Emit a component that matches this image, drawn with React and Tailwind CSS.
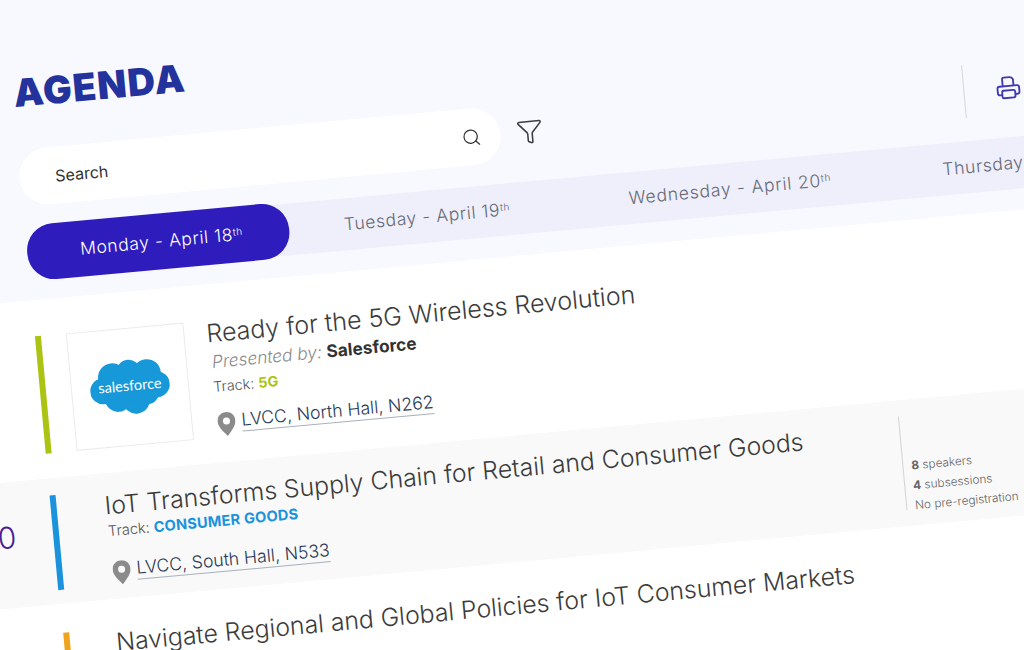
import React from "react";
import { Search, Funnel } from "lucide-react";

function Pin() {
  return (
    <svg width="18" height="24" viewBox="0 0 18 24" className="shrink-0 mt-[6px]">
      <path fillRule="evenodd" fill="#8b8b8b" d="M9 0C4 0 0 4 0 9c0 5.500 6 11.500 9 15 3-3.500 9-9.500 9-15 0-5-4-9-9-9zm0 5.500a3.500 3.500 0 1 1 0 7 3.500 3.500 0 0 1 0-7z" />
    </svg>
  );
}

function Place({ children, className }) {
  return (
    <div className={"flex items-center " + className}>
      <Pin />
      <span className="ml-[6px] text-[17.6px] leading-[22px] text-[#2b3a55] border-b border-[#a7b0bd] font-light">{children}</span>
    </div>
  );
}

function Day({ children, className }) {
  return (
    <div className={"shrink-0 text-[17.5px] font-light tracking-[0.6px] text-[#666a78] " + className}>
      {children}
      <sup className="text-[10px]">th</sup>
    </div>
  );
}

function Cloud() {
  return (
    <svg width="80" height="56" viewBox="0 0 80 56">
      <g fill="#1798d8">
        <circle cx="23" cy="17" r="14" />
        <circle cx="40" cy="13" r="12" />
        <circle cx="58" cy="16" r="14" />
        <circle cx="67" cy="28" r="13" />
        <circle cx="13" cy="30" r="13" />
        <circle cx="27" cy="39" r="13" />
        <circle cx="45" cy="42" r="13.5" />
        <circle cx="57" cy="36" r="11" />
        <rect x="18" y="14" width="44" height="28" />
      </g>
      <text x="40" y="32" textAnchor="middle" fill="#ffffff" fontSize="14.5" fontFamily="Lato, sans-serif">salesforce</text>
    </svg>
  );
}

export default function App() {
  return (
    <div className="w-[1024px] h-[650px] overflow-hidden bg-[#f8f9ff] font-['Inter',sans-serif]">
      <div className="w-[1300px] h-[780px] origin-top-left [transform:rotate(-5.25deg)_translateX(-82px)]">
        <header className="h-[302px] pl-[85px] flex flex-col">
          <h1 className="pt-[72px] h-[151px] text-[38px] leading-[44px] font-black tracking-[1.2px] text-[#24339c] pl-[2px]">AGENDA</h1>
          <div className="h-[57px] flex items-center">
            <div className="w-[483px] h-[57px] rounded-full bg-white flex items-center justify-between pl-[36px] pr-[19px]">
              <span className="text-[16px] text-[#333]">Search</span>
              <Search size={20} strokeWidth={1.5} className="text-[#333]" />
            </div>
            <Funnel size={27} strokeWidth={1.4} className="ml-[16px] text-[#3c3c44]" />
            <div className="ml-[422px] w-px h-[53px] bg-[#d5d6dd]" />
            <svg width="26" height="26" viewBox="0 0 24 24" fill="none" stroke="#4038b4" strokeWidth="1.7" strokeLinejoin="round" className="ml-[31px]">
              <path d="M7 10V3.500A1.500 1.500 0 0 1 8.500 2h5.500c1 0 2 .5 3 2v6" />
              <path d="M6 18H4a2 2 0 0 1-2-2v-4a2 2 0 0 1 2-2h16a2 2 0 0 1 2 2v4a2 2 0 0 1-2 2h-2" />
              <rect x="6" y="14" width="12" height="7" rx="1.5" />
            </svg>
          </div>
          <div className="mt-[21px] ml-[1px] h-[52px] flex items-center rounded-l-[26px] bg-[#eeeffa]">
            <div className="w-[263px] h-[56px] shrink-0 rounded-[27px] bg-[#2e1cbc] text-white text-[17.5px] font-light tracking-[0.6px] flex items-center pl-[53px]">
              <span>Monday - April 18<sup className="text-[10px]">th</sup></span>
            </div>
            <Day className="ml-[55px] w-[286px]">Tuesday - April 19</Day>
            <Day className="w-[315px] tracking-[0.8px]">Wednesday - April 20</Day>
            <Day>Thursday - April 21</Day>
          </div>
        </header>

        <section className="h-[179px] bg-white flex pt-[36px] pl-[86px]">
          <div className="w-[6px] h-[118px] bg-[#abc312]" />
          <div className="ml-[25px] w-[118px] h-[118px] border border-[#ebebeb] flex items-center justify-center">
            <Cloud />
          </div>
          <div className="ml-[22px] flex flex-col">
            <h2 className="text-[25px] leading-[30px] font-light text-[#3c3c3c] -mt-[2px] whitespace-nowrap">Ready for the 5G Wireless Revolution</h2>
            <p className="text-[17.3px] leading-[22px] italic font-light text-[#8a8a8a] ml-[3px] mt-[3px]">Presented by: <b className="not-italic font-bold text-[#333]">Salesforce</b></p>
            <p className="text-[14.4px] leading-[20px] font-light text-[#555] ml-[2px] mt-[4px]">Track: <b className="font-bold text-[#abc312]">5G</b></p>
            <Place className="ml-[3px] mt-[10px]">LVCC, North Hall, N262</Place>
          </div>
        </section>

        <section className="h-[126px] bg-[#f9f9f9] flex">
          <div className="w-[49px] pt-[37px] text-right text-[30px] leading-[36px] font-light text-[#4a1d96] overflow-hidden whitespace-nowrap flex justify-end">10:00</div>
          <div className="ml-[37px] mt-[17px] w-[6px] h-[95px] bg-[#1b93dc]" />
          <div className="ml-[48px] pt-[17px] w-[798px] shrink-0 flex flex-col">
            <h2 className="text-[24.85px] leading-[30px] font-light text-[#3c3c3c] whitespace-nowrap">IoT Transforms Supply Chain for Retail and Consumer Goods</h2>
            <p className="text-[14.6px] leading-[20px] font-light text-[#555] mt-[1px] ml-[1px]">Track: <b className="font-bold text-[#1b93dc] tracking-[0.2px]">CONSUMER GOODS</b></p>
            <Place className="ml-[2px] mt-[14px]">LVCC, South Hall, N533</Place>
          </div>
          <div className="mt-[16px] h-[94px] w-px bg-[#d3d3d3]" />
          <div className="mt-[16px] h-[100px] pl-[8px] flex flex-col justify-end text-[11.8px] leading-[20px] font-light text-[#666]">
            <span><b className="font-bold">8</b> speakers</span>
            <span><b className="font-bold">4</b> subsessions</span>
            <span>No pre-registration</span>
          </div>
        </section>

        <section className="h-[180px] bg-white flex">
          <div className="ml-[87px] mt-[29px] w-[6px] h-[95px] bg-[#f0a31c]" />
          <div className="ml-[46px] pt-[28px]">
            <h2 className="text-[24.85px] leading-[30px] font-light text-[#3c3c3c] whitespace-nowrap">Navigate Regional and Global Policies for IoT Consumer Markets</h2>
          </div>
        </section>
      </div>
    </div>
  );
}
